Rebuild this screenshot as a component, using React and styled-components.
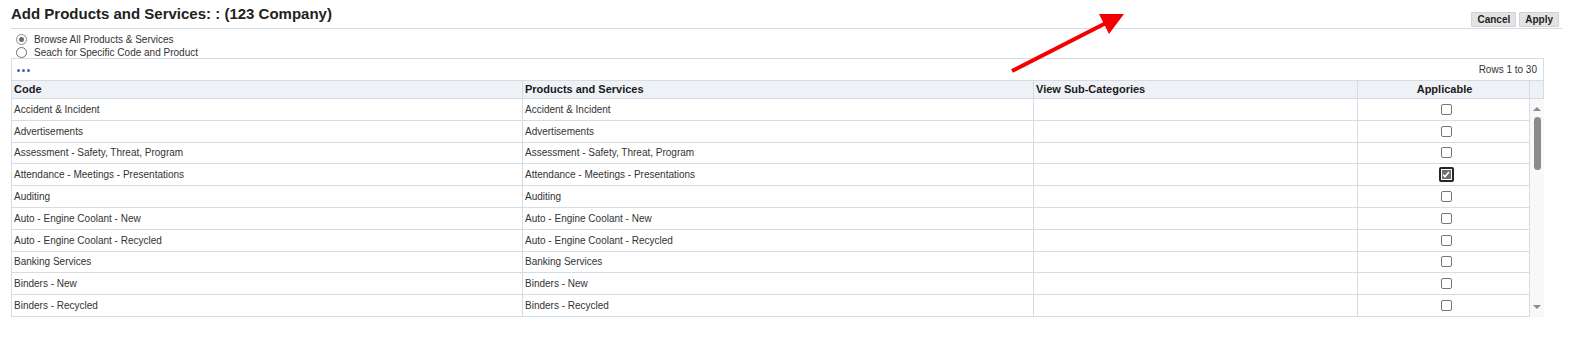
import React from "react";
import styled, { createGlobalStyle } from "styled-components";

const Global = createGlobalStyle`
  html, body { margin: 0; padding: 0; background: #fff; }
  body { font-family: "Liberation Sans", Arial, sans-serif; color: #333; }
`;

const Page = styled.div`
  position: relative;
  width: 1578px;
  height: 338px;
  overflow: hidden;
`;

const TitleBar = styled.div`
  display: flex;
  justify-content: space-between;
  align-items: flex-start;
  margin: 0 16px 0 11px;
  padding-top: 5px;
  height: 23px;
  border-bottom: 1px solid #d5dce4;
`;

const Title = styled.h1`
  margin: 0;
  font-size: 15px;
  line-height: 18px;
  font-weight: bold;
  color: #222;
`;

const Buttons = styled.div`
  display: flex;
  gap: 3px;
  margin-top: 7px;
  margin-right: 3px;
`;

const Button = styled.button`
  font-family: "Liberation Sans", Arial, sans-serif;
  font-size: 10px;
  font-weight: bold;
  color: #222;
  height: 15px;
  padding: 0 5px;
  border: 1px solid #d2d2d2;
  background: #e3e3e3;
  border-radius: 1px;
  line-height: 13px;
`;

const RadioGroup = styled.div`
  padding: 4px 0 0 16px;
  margin-bottom: -1px;
`;

const RadioRow = styled.label`
  display: flex;
  align-items: center;
  gap: 7px;
  height: 13px;
  font-size: 10px;
  color: #333;
`;

const Radio = styled.span`
  box-sizing: border-box;
  width: 11px;
  height: 11px;
  border-radius: 50%;
  border: 1px solid ${(p) => (p.$checked ? "#8a8a8a" : "#6e6e6e")};
  background: #fff;
  display: flex;
  align-items: center;
  justify-content: center;
  &::after {
    content: "";
    width: 5px;
    height: 5px;
    border-radius: 50%;
    background: ${(p) => (p.$checked ? "#6b6b6b" : "transparent")};
  }
`;

const Frame = styled.div`
  margin-left: 11px;
  width: 1533px;
`;

const Toolbar = styled.div`
  box-sizing: border-box;
  height: 23px;
  border: 1px solid #d5dce4;
  display: flex;
  align-items: center;
  justify-content: space-between;
  padding: 0 6px 0 5px;
`;

const Dots = styled.span`
  display: flex;
  gap: 2px;
  padding-top: 1px;
  span {
    width: 3px;
    height: 3px;
    border-radius: 50%;
    background: #4169a8;
  }
`;

const RowsInfo = styled.span`
  font-size: 10px;
  color: #333;
`;

const cols = "511px 511px 324px 172px";

const HeaderRow = styled.div`
  display: grid;
  grid-template-columns: ${cols} 14px;
  height: 18px;
  background: #eef1f5;
  border-left: 1px solid #d5dce4;
`;

const HeadCell = styled.div`
  box-sizing: border-box;
  border-right: 1px solid #d5dce4;
  border-bottom: 1px solid #d5dce4;
  font-size: 11px;
  font-weight: bold;
  color: #1a1a1a;
  line-height: 17px;
  padding-left: 2px;
  text-align: ${(p) => (p.$center ? "center" : "left")};
  white-space: nowrap;
`;

const Body = styled.div`
  display: flex;
`;

const Rows = styled.div`
  border-left: 1px solid #d5dce4;
`;

const Row = styled.div`
  display: grid;
  grid-template-columns: ${cols};
  height: 21.8px;
`;

const Cell = styled.div`
  box-sizing: border-box;
  border-right: 1px solid #d5dce4;
  border-bottom: 1px solid #d5dce4;
  font-size: 10px;
  color: #333;
  padding-left: 2px;
  display: flex;
  align-items: center;
  justify-content: ${(p) => (p.$center ? "center" : "flex-start")};
  white-space: nowrap;
`;

const Check = styled.span`
  box-sizing: border-box;
  width: ${(p) => (p.$checked ? "15px" : "11px")};
  height: ${(p) => (p.$checked ? "15px" : "11px")};
  margin-left: 3px;
  border-radius: 2px;
  border: ${(p) => (p.$checked ? "2px solid #262626" : "1px solid #767676")};
  background: ${(p) => (p.$checked ? "#6f6f6f" : "#fff")};
  box-shadow: ${(p) => (p.$checked ? "inset 0 0 0 1px #fff" : "none")};
  display: flex;
  align-items: center;
  justify-content: center;
`;

const Scrollbar = styled.div`
  width: 14px;
  background: #f8f8f8;
  display: flex;
  flex-direction: column;
  align-items: center;
  padding-top: 8px;
  box-sizing: border-box;
  height: 218px;
`;

const Arrow = styled.span`
  width: 0;
  height: 0;
  border-left: 4px solid transparent;
  border-right: 4px solid transparent;
  ${(p) =>
    p.$down
      ? "border-top: 4px solid #8a8a8a; margin-top: auto; margin-bottom: 8px;"
      : "border-bottom: 4px solid #8a8a8a;"}
`;

const Thumb = styled.span`
  width: 7px;
  height: 53px;
  margin-top: 6px;
  border-radius: 4px;
  background: #8b8b8b;
`;

const Annotation = styled.svg`
  position: absolute;
  left: 0;
  top: 0;
  pointer-events: none;
`;

const items = [
  "Accident & Incident",
  "Advertisements",
  "Assessment - Safety, Threat, Program",
  "Attendance - Meetings - Presentations",
  "Auditing",
  "Auto - Engine Coolant - New",
  "Auto - Engine Coolant - Recycled",
  "Banking Services",
  "Binders - New",
  "Binders - Recycled",
];

export default function App() {
  return (
    <Page>
      <Global />
      <TitleBar>
        <Title>Add Products and Services: : (123 Company)</Title>
        <Buttons>
          <Button>Cancel</Button>
          <Button>Apply</Button>
        </Buttons>
      </TitleBar>
      <RadioGroup>
        <RadioRow>
          <Radio $checked />
          Browse All Products &amp; Services
        </RadioRow>
        <RadioRow>
          <Radio />
          Seach for Specific Code and Product
        </RadioRow>
      </RadioGroup>
      <Frame>
        <Toolbar>
          <Dots>
            <span />
            <span />
            <span />
          </Dots>
          <RowsInfo>Rows 1 to 30</RowsInfo>
        </Toolbar>
        <HeaderRow>
          <HeadCell>Code</HeadCell>
          <HeadCell>Products and Services</HeadCell>
          <HeadCell>View Sub-Categories</HeadCell>
          <HeadCell $center>Applicable</HeadCell>
          <HeadCell />
        </HeaderRow>
        <Body>
          <Rows>
            {items.map((name, i) => {
              const checked = i === 3;
              return (
                <Row key={name}>
                  <Cell>{name}</Cell>
                  <Cell>{name}</Cell>
                  <Cell />
                  <Cell $center>
                    <Check $checked={checked}>
                      {checked && (
                        <svg width="8" height="7" viewBox="0 0 8 7">
                          <path d="M1 3.8 L3 5.6 L7 1" stroke="#fff" strokeWidth="1.6" fill="none" />
                        </svg>
                      )}
                    </Check>
                  </Cell>
                </Row>
              );
            })}
          </Rows>
          <Scrollbar>
            <Arrow />
            <Thumb />
            <Arrow $down />
          </Scrollbar>
        </Body>
      </Frame>
      <Annotation width="1578" height="338" viewBox="0 0 1578 338">
        <line x1="1012" y1="71" x2="1106" y2="23" stroke="#f50000" strokeWidth="4" />
        <polygon points="1124,14 1099,14 1109,34" fill="#f50000" />
      </Annotation>
    </Page>
  );
}
